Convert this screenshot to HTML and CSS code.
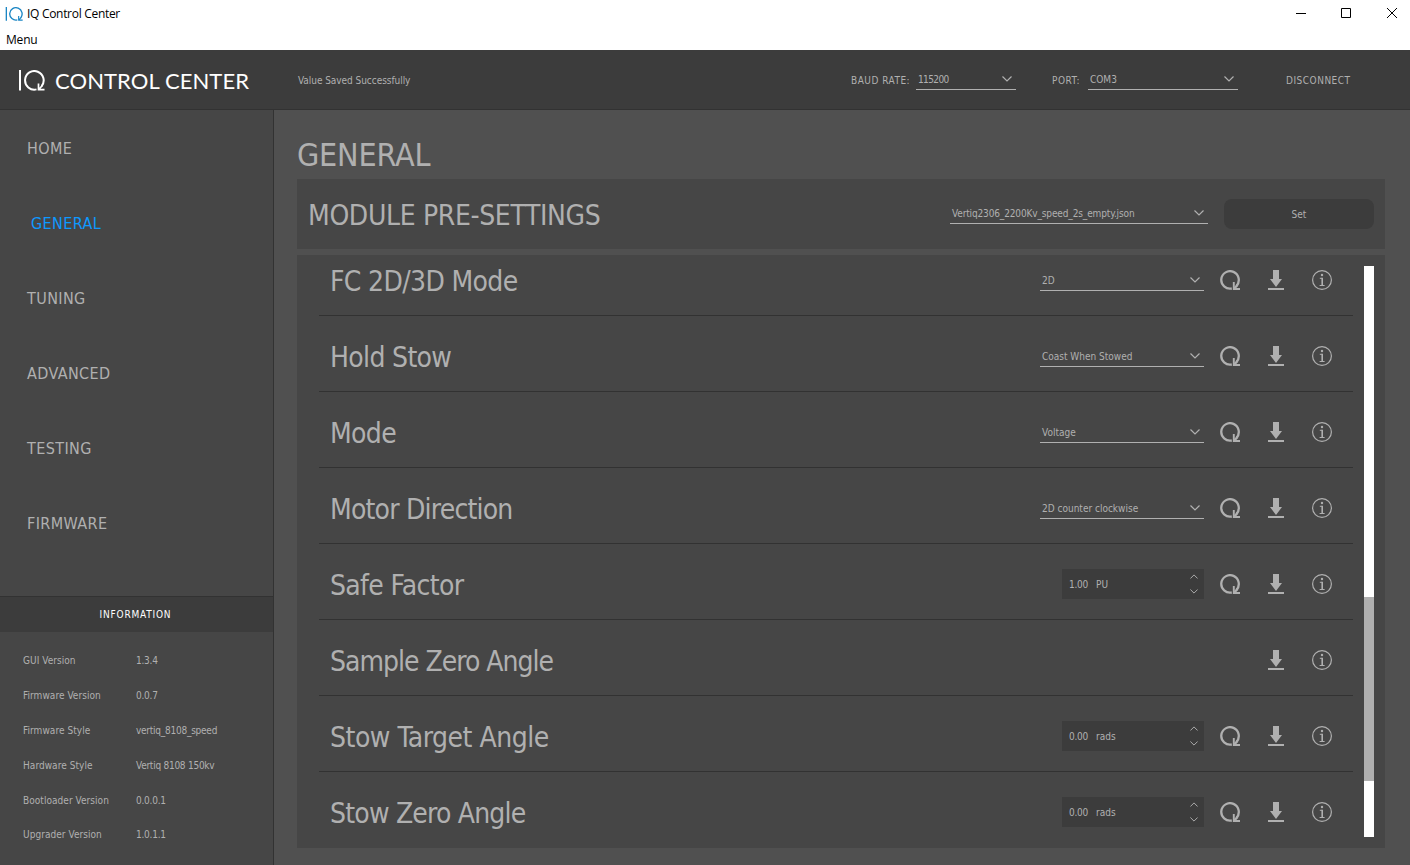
FILE: index.html
```html
<!DOCTYPE html>
<html lang="en">
<head>
<meta charset="utf-8">
<title>IQ Control Center</title>
<link rel="stylesheet" href="styles.css">
</head>
<body>
<svg class="defs" width="0" height="0">
  <symbol id="refresh" viewBox="0 0 20 20"><path d="M16.6 15.7A8.75 8.75 0 1 0 11.8 18.5" fill="none" stroke="currentColor" stroke-width="2.3"/><path d="M13.8 12V19H20" fill="none" stroke="currentColor" stroke-width="1.9"/><path d="M14 19L17.4 15" fill="none" stroke="currentColor" stroke-width="2.4"/></symbol>
  <symbol id="save" viewBox="0 0 16 20"><path d="M5 0h6v9h3l-6 8-6-8h3zM0 18h16v2H0z" fill="currentColor"/></symbol>
  <symbol id="info" viewBox="0 0 20 20"><circle cx="10" cy="10" r="9.4" fill="none" stroke="currentColor" stroke-width="1.2"/><circle cx="10" cy="5" r="1.2" fill="currentColor"/><path d="M7.8 8.3h2.4" fill="none" stroke="currentColor"/><path d="M10.200 7.800V15.300" fill="none" stroke="currentColor" stroke-width="1.6"/><path d="M7.600 15.500h5" fill="none" stroke="currentColor"/></symbol>
  <symbol id="down" viewBox="0 0 10 6"><path d="M.5 .5L5 5L9.5 .5" fill="none" stroke="currentColor" stroke-width="1.2"/></symbol>
  <symbol id="up" viewBox="0 0 10 6"><path d="M.5 5.5L5 1L9.5 5.5" fill="none" stroke="currentColor" stroke-width="1.2"/></symbol>
  <symbol id="logo" viewBox="0 0 27 21"><path d="M2 0V20.500M23.600 16.200A9.300 9.300 0 1 0 18.500 19.400" fill="none" stroke="currentColor" stroke-width="2"/><path d="M20.500 13.500V19.700H26.500M20.800 19.500L24.300 15.500" fill="none" stroke="currentColor" stroke-width="1.700"/></symbol>
</svg>
<div class="titlebar">
  <svg class="app-icon"><use href="#logo"/></svg><span class="app-name">IQ Control Center</span>
  <svg class="win-buttons" viewBox="0 0 102 11"><path d="M0 5.500h10M45.500 .5h9v9h-9zM91 0l10 10M101 0L91 10" fill="none" stroke="#000"/></svg>
</div>
<div class="menubar">Menu</div>
<header class="header">
  <svg class="logo"><use href="#logo"/></svg><span class="brand">CONTROL CENTER</span>
  <span class="status">Value Saved Successfully</span>
  <span class="label baud-label">BAUD RATE:</span>
  <div class="combo baud"><span>115200</span><svg class="arrow"><use href="#down"/></svg></div>
  <span class="label port-label">PORT:</span>
  <div class="combo port"><span>COM3</span><svg class="arrow"><use href="#down"/></svg></div>
  <span class="label disconnect">DISCONNECT</span>
</header>
<div class="body">
  <aside class="sidebar">
    <nav class="nav">
      <a>HOME</a><a class="active">GENERAL</a><a>TUNING</a><a>ADVANCED</a><a>TESTING</a><a>FIRMWARE</a>
    </nav>
    <div class="info-title">INFORMATION</div>
    <dl class="info">
      <dt>GUI Version</dt><dd>1.3.4</dd>
      <dt>Firmware Version</dt><dd>0.0.7</dd>
      <dt>Firmware Style</dt><dd>vertiq_8108_speed</dd>
      <dt>Hardware Style</dt><dd>Vertiq 8108 150kv</dd>
      <dt>Bootloader Version</dt><dd>0.0.0.1</dd>
      <dt>Upgrader Version</dt><dd>1.0.1.1</dd>
    </dl>
  </aside>
  <main class="main">
    <h1>GENERAL</h1>
    <section class="presets">
      <h2>MODULE PRE-SETTINGS</h2>
      <div class="combo file"><span>Vertiq2306_2200Kv_speed_2s_empty.json</span><svg class="arrow"><use href="#down"/></svg></div>
      <button class="set">Set</button>
    </section>
    <section class="settings">
      <div class="list">
        <div class="row"><h3>FC 2D/3D Mode</h3><div class="combo"><span>2D</span><svg class="arrow"><use href="#down"/></svg></div><svg class="ic"><use href="#refresh"/></svg><svg class="ic save"><use href="#save"/></svg><svg class="ic"><use href="#info"/></svg></div>
        <div class="row"><h3>Hold Stow</h3><div class="combo"><span>Coast When Stowed</span><svg class="arrow"><use href="#down"/></svg></div><svg class="ic"><use href="#refresh"/></svg><svg class="ic save"><use href="#save"/></svg><svg class="ic"><use href="#info"/></svg></div>
        <div class="row"><h3>Mode</h3><div class="combo"><span>Voltage</span><svg class="arrow"><use href="#down"/></svg></div><svg class="ic"><use href="#refresh"/></svg><svg class="ic save"><use href="#save"/></svg><svg class="ic"><use href="#info"/></svg></div>
        <div class="row"><h3 class="tight">Motor Direction</h3><div class="combo"><span>2D counter clockwise</span><svg class="arrow"><use href="#down"/></svg></div><svg class="ic"><use href="#refresh"/></svg><svg class="ic save"><use href="#save"/></svg><svg class="ic"><use href="#info"/></svg></div>
        <div class="row"><h3>Safe Factor</h3><div class="spin"><span class="num">1.00</span><span>PU</span><div class="steps"><svg><use href="#up"/></svg><svg><use href="#down"/></svg></div></div><svg class="ic"><use href="#refresh"/></svg><svg class="ic save"><use href="#save"/></svg><svg class="ic"><use href="#info"/></svg></div>
        <div class="row"><h3 class="tighter">Sample Zero Angle</h3><svg class="ic save"><use href="#save"/></svg><svg class="ic"><use href="#info"/></svg></div>
        <div class="row"><h3 class="loose">Stow Target Angle</h3><div class="spin"><span class="num">0.00</span><span>rads</span><div class="steps"><svg><use href="#up"/></svg><svg><use href="#down"/></svg></div></div><svg class="ic"><use href="#refresh"/></svg><svg class="ic save"><use href="#save"/></svg><svg class="ic"><use href="#info"/></svg></div>
        <div class="row"><h3 class="tight">Stow Zero Angle</h3><div class="spin"><span class="num">0.00</span><span>rads</span><div class="steps"><svg><use href="#up"/></svg><svg><use href="#down"/></svg></div></div><svg class="ic"><use href="#refresh"/></svg><svg class="ic save"><use href="#save"/></svg><svg class="ic"><use href="#info"/></svg></div>
      </div>
      <div class="scrollbar"><div class="thumb"></div></div>
    </section>
  </main>
</div>
</body>
</html>
```

FILE: styles.css
```css
* { box-sizing: border-box; }
body { margin: 0; width: 1410px; height: 865px; overflow: hidden; display: flex; flex-direction: column; font: 10px/14px "DejaVu Sans Condensed", "DejaVu Sans", sans-serif; font-stretch: condensed; color: #b0b0b0; background: #505050; white-space: nowrap; }
.defs { display: none; }
h1, h2, h3, dl, dd { margin: 0; font-weight: normal; }
svg { flex: none; display: block; }
.titlebar { height: 27px; background: #fff; color: #000; display: flex; align-items: center; padding: 0 12px 0 5px; font: 12px/16px "Open Sans", sans-serif; }
.app-icon { width: 18px; height: 14px; color: #1b86c4; margin-right: 4px; stroke-width: 3; }
.app-name { flex: 1; letter-spacing: -.3px; }
.win-buttons { width: 102px; height: 11px; }
.menubar { height: 23px; background: #fff; color: #000; padding: 5px 6px; font: 12px/16px "Open Sans", sans-serif; letter-spacing: -.2px; }
.header { height: 60px; background: #3c3c3c; border-bottom: 1px solid #323232; display: flex; align-items: center; padding: 1px 0 0 18px; }
.logo { width: 27px; height: 21px; margin-right: 10px; }
.logo, .brand { color: #fff; }
.brand { font: 22px/26px Lato, sans-serif; width: 243px; padding-top: 2px; letter-spacing: .08px; }
.status { flex: 1; padding-top: 2px; letter-spacing: -.05px; }
.label { padding-top: 2px; letter-spacing: .5px; }
.combo { display: flex; align-items: center; justify-content: space-between; width: 164px; height: 21px; border-bottom: 1px solid #b0b0b0; padding: 0 4px 0 2px; flex: none; }
.combo span { padding-top: 2px; }
.arrow { width: 10px; height: 6px; }
.baud-label { width: 65px; }
.header .combo { height: 20px; padding-bottom: 1px; margin-bottom: 1px; }
.header .combo.baud { width: 100px; margin-right: 36px; letter-spacing: -.6px; }
.port-label { width: 36px; }
.header .combo.port { width: 150px; margin-right: 48px; }
.disconnect { width: 124px; }
.body { flex: 1; display: flex; min-height: 0; }
.sidebar { width: 274px; background: #464646; border-right: 1px solid #323232; display: flex; flex-direction: column; }
.nav { height: 486px; font-size: 16px; letter-spacing: .4px; }
.nav a { display: flex; align-items: center; height: 75px; padding: 2px 0 0 27px; }
.nav .active { color: #0d99ff; padding-left: 31px; }
.info-title { height: 36px; border-top: 1px solid #323232; background: #3c3c3c; color: #fff; text-align: center; line-height: 35px; padding-right: 2px; letter-spacing: .8px; }
.info { display: grid; grid-template-columns: 113px 1fr; grid-auto-rows: 34.8px; align-items: center; padding: 12px 0 0 23px; letter-spacing: .05px; }
.info dd { letter-spacing: -.25px; }
.main { flex: 1; padding: 23px 25px 0 23px; }
h1 { font-size: 32px; line-height: 44px; height: 46px; letter-spacing: -.2px; }
.presets { height: 70px; background: #464646; display: flex; align-items: center; padding: 0 11px; margin-bottom: 6px; }
h2 { flex: 1; font-size: 28px; line-height: 36px; padding-top: 4px; letter-spacing: -.35px; }
.file { width: 258px; height: 20px; margin: 0 16px 1px 0; letter-spacing: -.14px; }
.set { width: 150px; height: 30px; border: 0; border-radius: 8px; background: #3c3c3c; color: inherit; font: inherit; padding-top: 3px; }
.settings { height: 593px; background: #464646; padding: 11px 11px 0 22px; display: flex; justify-content: space-between; }
.list { width: 1034px; height: 582px; overflow: hidden; display: flex; flex-direction: column; justify-content: flex-end; }
.row { height: 76px; flex: none; border-bottom: 1px solid #323232; display: flex; align-items: center; padding: 5px 21px 0 11px; }
.row:last-child { border-color: transparent; }
h3 { flex: 1; font-size: 28px; line-height: 26px; margin-top: 4px; letter-spacing: -.66px; }
.tight { letter-spacing: -.8px; }
.tighter { letter-spacing: -1px; }
.loose { letter-spacing: -.48px; }
.ic { width: 20px; height: 20px; margin-left: 26px; }
.combo + .ic, .spin + .ic { margin-left: 16px; }
.save { width: 16px; margin: 0 2px 0 28px; }
.spin { width: 142px; height: 30px; background: #3c3c3c; display: flex; align-items: center; padding: 0 6px 0 7px; }
.spin span { padding-top: 2px; }
.num { width: 27px; letter-spacing: -.3px; }
.steps { margin-left: auto; display: flex; flex-direction: column; gap: 10px; }
.steps svg { width: 8px; height: 5px; }
.scrollbar { width: 10px; height: 571px; background: #fff; padding-top: 331px; }
.thumb { height: 184px; background: #b0b0b0; }
```
